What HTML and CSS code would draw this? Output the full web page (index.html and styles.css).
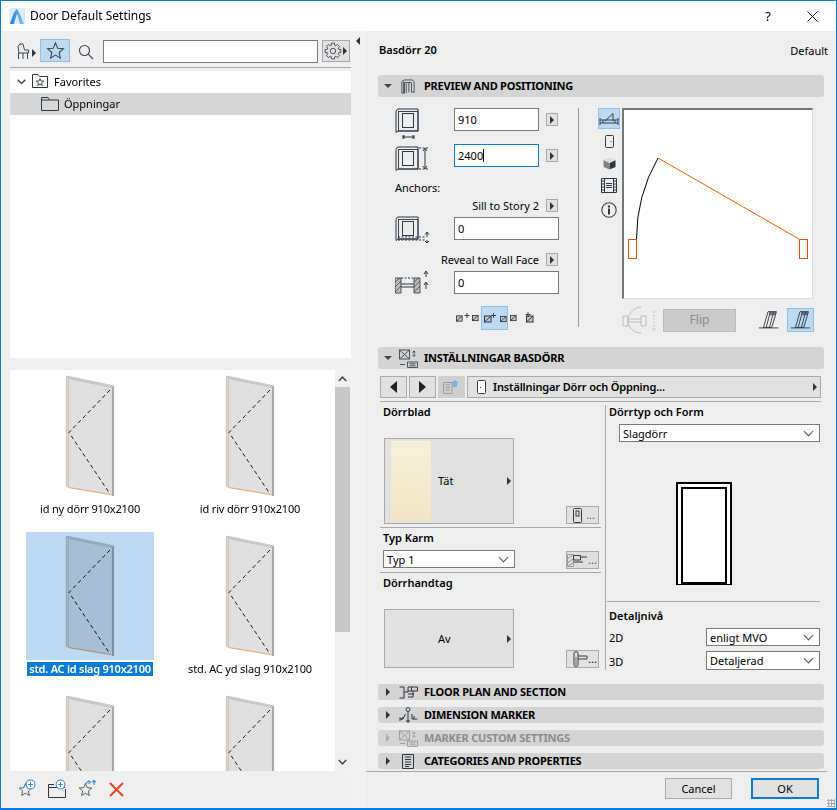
FILE: index.html
```html
<!DOCTYPE html>
<html lang="sv">
<head>
<meta charset="utf-8">
<title>Door Default Settings</title>
<link rel="stylesheet" href="styles.css">
</head>
<body>
<svg class="defs" width="0" height="0" aria-hidden="true">
  <defs>
    <linearGradient id="app-arch" x1="0" y1="0" x2="1" y2="0">
      <stop offset="0" stop-color="#1f78de"/>
      <stop offset="1" stop-color="#8cc3f5"/>
    </linearGradient>
    <symbol id="door-thumb" viewBox="0 0 128 128">
      <polygon points="40,4 88,14 88,124 42,116 40,115" fill="#e0e0e0"/>
      <polyline points="40,5 88,15" fill="none" stroke="#c8c8c8" stroke-width="3"/>
      <line x1="40.5" y1="5" x2="40.5" y2="115" stroke="#c9c9c9" stroke-width="1.5"/>
      <line x1="42.5" y1="8" x2="42.5" y2="115" stroke="#d6c2b4" stroke-width="1.2"/>
      <line x1="87" y1="15" x2="87" y2="124" stroke="#a8a8a8" stroke-width="2.2"/>
      <line x1="43" y1="115.5" x2="85" y2="122.5" stroke="#f3a878" stroke-width="1"/>
      <polyline points="84,18 43,60.5 84,122" fill="none" stroke="#1a1a1a" stroke-width="1" stroke-dasharray="4 3"/>
    </symbol>
    <symbol id="star" viewBox="0 0 20 20">
      <polygon points="10,2 12.3,7.6 18.4,8.1 13.8,12.1 15.2,18 10,14.9 4.8,18 6.2,12.1 1.6,8.1 7.7,7.6" fill="none" stroke="#3b4650" stroke-width="1.1"/>
    </symbol>
    <symbol id="plus" viewBox="0 0 12 12">
      <circle cx="6" cy="6" r="4.8" fill="#fff" stroke="#2f86e8" stroke-width="1.1"/>
      <path d="M3.4 6H8.6M6 3.4V8.6" stroke="#2f86e8" stroke-width="1.1"/>
    </symbol>
    <symbol id="win-frame" viewBox="0 0 24 26">
      <path d="M1 3.5 2.5 1H23V23H3L1 24.5Z" fill="none" stroke="#2e3640" stroke-width="1"/>
      <rect x="3.5" y="3.5" width="19.500" height="19.500" fill="none" stroke="#2e3640" stroke-width=".9"/>
      <rect x="7.500" y="5.500" width="11" height="14" fill="none" stroke="#2e3640" stroke-width="1"/>
    </symbol>
    <symbol id="leaf" viewBox="0 0 28 22">
      <path d="M8 19 13 2H22L17 19ZM11 19 15.500 2M14.500 19 19 2" fill="none" stroke="#333c46" stroke-width="1"/>
      <path d="M15 2h7l-1 4h-7z" fill="#333c46" opacity=".65"/>
      <line x1="3" y1="19.500" x2="24" y2="19.500" stroke="#333c46"/>
    </symbol>
    <symbol id="anchor-mark" viewBox="0 0 8 8">
      <rect x=".5" y="1" width="6.5" height="6" fill="#c8c8c8" stroke="#2e3640"/>
      <path d="M.5 7 7 1" stroke="#2e3640"/>
    </symbol>
  </defs>
</svg>

<div class="window">
  <header class="titlebar">
    <svg class="app-icon" width="16" height="16" viewBox="0 0 16 16">
      <path d="M0 16V2L2 0H16V16Z" fill="#dcebfa"/>
      <path d="M1 16C3 10 5 3 8 1 10 4 13 11 15 16H11C10 12 9 8 8 6 7 9 6 12 5 16Z" fill="url(#app-arch)"/>
    </svg>
    <span class="title-text">Door Default Settings</span>
    <span class="title-help">?</span>
    <svg class="title-close" width="11" height="11" viewBox="0 0 11 11"><path d="M.5.5 10.5 10.5M10.5.5 .5 10.5" stroke="#111" fill="none"/></svg>
  </header>

  <main class="main">
    <aside class="left">
      <div class="toolbar">
        <svg class="tb-chair" width="12" height="16" viewBox="0 0 12 16">
          <path d="M1.500 10V16M2 10 1 3 3 1H6L7.500 7H11.500V10ZM10.500 10V16M6 10V16" fill="none" stroke="#3b4650"/>
        </svg>
        <span class="tri-right tb-tri"></span>
        <span class="tb-star"><svg width="19" height="19"><use href="#star"/></svg></span>
        <svg class="tb-search" width="16" height="16" viewBox="0 0 16 16"><circle cx="6.5" cy="6.5" r="5" fill="none" stroke="#3b4650" stroke-width="1.1"/><path d="M10.2 10.2 15 15" stroke="#3b4650" stroke-width="1.1"/></svg>
        <div class="tb-input"></div>
        <span class="tb-gear">
          <svg width="18" height="18" viewBox="-9 -9 18 18">
            <polygon points="5.77,-1.65 7.85,-1.53 7.85,1.53 5.77,1.65 5.25,2.91 6.63,4.47 4.47,6.63 2.91,5.25 1.65,5.77 1.53,7.85 -1.53,7.85 -1.65,5.77 -2.91,5.25 -4.47,6.63 -6.63,4.47 -5.25,2.91 -5.77,1.65 -7.85,1.53 -7.85,-1.53 -5.77,-1.65 -5.25,-2.91 -6.63,-4.47 -4.47,-6.63 -2.91,-5.25 -1.65,-5.77 -1.53,-7.85 1.53,-7.85 1.65,-5.77 2.91,-5.25 4.47,-6.63 6.63,-4.47 5.25,-2.91" fill="none" stroke="#3b4650" stroke-width=".9"/>
            <circle r="2.7" fill="none" stroke="#3b4650" stroke-width=".9"/>
          </svg>
          <span class="tri-right"></span>
        </span>
      </div>
      <div class="tree">
        <div class="tree-row">
          <svg class="tree-chev" width="9" height="6" viewBox="0 0 9 6"><path d="M.7.7 4.5 4.5 8.3.7" fill="none" stroke="#444" stroke-width="1.4"/></svg>
          <svg class="tree-folder" width="16" height="14" viewBox="0 0 16 14">
            <path d="M.5 13.5V.5H6L7.5 2.5H15.5V13.5Z" fill="none" stroke="#2e3640"/>
            <polygon points="8,4.5 9,7 11.6,7.2 9.6,8.9 10.3,11.5 8,10.1 5.7,11.5 6.4,8.9 4.4,7.2 7,7" fill="none" stroke="#2e3640" stroke-width=".9"/>
          </svg>
          <span>Favorites</span>
        </div>
        <div class="tree-row is-active">
          <svg class="tree-folder-sub" width="18" height="14" viewBox="0 0 18 14"><path d="M.5 13.5V.5H7L8.5 3H17.5V13.5ZM.5 3H8.5" fill="none" stroke="#2e3640"/></svg>
          <span>Öppningar</span>
        </div>
      </div>

      <div class="lib">
        <div class="thumbs">
          <figure class="thumb">
            <svg class="thumb-img" width="128" height="128"><use href="#door-thumb"/></svg>
            <figcaption>id ny dörr 910x2100</figcaption>
          </figure>
          <figure class="thumb">
            <svg class="thumb-img" width="128" height="128"><use href="#door-thumb"/></svg>
            <figcaption>id riv dörr 910x2100</figcaption>
          </figure>
          <figure class="thumb is-selected">
            <div class="thumb-pick"><svg class="thumb-img" width="128" height="128"><use href="#door-thumb"/></svg></div>
            <figcaption>std. AC id slag 910x2100</figcaption>
          </figure>
          <figure class="thumb">
            <svg class="thumb-img" width="128" height="128"><use href="#door-thumb"/></svg>
            <figcaption>std. AC yd slag 910x2100</figcaption>
          </figure>
          <figure class="thumb">
            <svg class="thumb-img" width="128" height="128"><use href="#door-thumb"/></svg>
          </figure>
          <figure class="thumb">
            <svg class="thumb-img" width="128" height="128"><use href="#door-thumb"/></svg>
          </figure>
        </div>
        <div class="scrollbar">
          <svg class="sb-arrow" width="9" height="6" viewBox="0 0 9 6"><path d="M.8 5 4.5 1.2 8.2 5" fill="none" stroke="#444" stroke-width="1.5"/></svg>
          <div class="sb-thumb"></div>
          <svg class="sb-arrow sb-down" width="9" height="6" viewBox="0 0 9 6"><path d="M.8 1 4.5 4.8 8.2 1" fill="none" stroke="#444" stroke-width="1.5"/></svg>
        </div>
      </div>

      <div class="lib-actions">
        <svg width="20" height="20" viewBox="0 0 20 20"><use href="#star" x="0" y="3" width="15" height="15"/><use href="#plus" x="7" y="0" width="11" height="11"/></svg>
        <svg class="act-folder" width="20" height="20" viewBox="0 0 20 20"><path d="M1.5 5.5H7M1.5 8.5V18.5H18.5V10M1.5 5.5V8.5H18" fill="none" stroke="#2e3640" stroke-width="1"/><use href="#plus" x="8" y="0" width="11" height="11"/></svg>
        <svg class="act-star" width="20" height="20" viewBox="0 0 20 20"><use href="#star" x="0" y="3" width="15" height="15"/><path d="M8 5C8.5 2.5 10.5 2 12 3M16 6V1.5M14 3.5 16 1.3 18 3.5M10.5 1.5 12.3 3 10.5 5" fill="none" stroke="#2f86e8" stroke-width="1.1"/></svg>
        <svg class="act-x" width="15" height="15" viewBox="0 0 15 15"><path d="M1 1 14 14M14 1 1 14" stroke="#f0431e" stroke-width="2"/></svg>
      </div>
    </aside>

    <div class="splitter"><span class="tri-left"></span></div>

    <section class="right">
      <div class="obj-head"><strong>Basdörr 20</strong><span class="obj-default">Default</span></div>

      <div class="sec-head sec-open">
        <span class="tri-down"></span>
        <svg class="sec-icon" width="14" height="15" viewBox="0 0 16 17"><path d="M1 16V3L4 1H13L15 3V15H12V4H4V16ZM3 16V3M6 16V5M9 4V15" fill="none" stroke="#3b4650"/></svg>
        <span class="sec-name">PREVIEW AND POSITIONING</span>
      </div>

      <div class="preview">
        <div class="pos">
          <div class="pos-row">
            <svg class="pos-icon" width="36" height="32" viewBox="0 0 36 32"><use href="#win-frame" width="24" height="26"/><path d="M8 29H19M8 29l2-1.5M8 29l2 1.5M19 29l-2-1.5M19 29l-2 1.5M8 27v4M19 27v4" stroke="#2e3640" fill="none"/></svg>
            <div class="field field-s">910</div>
            <span class="arrow-btn"></span>
          </div>
          <div class="pos-row pos-row-gap">
            <svg class="pos-icon pos-icon-2" width="36" height="26" viewBox="0 0 36 26"><use href="#win-frame" width="24" height="26"/><path d="M24 2H33M24 23H33" stroke="#2e3640" stroke-dasharray="2 1.5"/><path d="M30 2V23M30 2l-2 3M30 2l2 3M30 23l-2-3M30 23l2-3" stroke="#2e3640" fill="none"/></svg>
            <div class="field field-s field-focus">2400<span class="caret"></span></div>
            <span class="arrow-btn"></span>
          </div>
          <div class="pos-label">Anchors:</div>
          <div class="pos-anchor pos-anchor-1"><span>Sill to Story 2</span><span class="arrow-btn"></span></div>
          <div class="pos-row pos-row-tight">
            <svg class="pos-icon pos-icon-3" width="36" height="28" viewBox="0 0 36 28"><use href="#win-frame" width="24" height="26"/><path d="M3 21H30M3 24H30" stroke="#2e3640" stroke-dasharray="2 1.5"/><path d="M32 16V21M32 16l-2 2.5M32 16l2 2.5M32 24v3M32 27l-2-2M32 27l2-2" stroke="#2e3640" fill="none"/></svg>
            <div class="field">0</div>
          </div>
          <div class="pos-anchor pos-anchor-2"><span>Reveal to Wall Face</span><span class="arrow-btn"></span></div>
          <div class="pos-row pos-row-tight">
            <svg class="pos-icon" width="36" height="24" viewBox="0 0 36 24"><path d="M0 7H6V22H0ZM19 7H25V22H19Z" fill="#bdbdbd" stroke="#2e3640" stroke-width=".8"/><path d="M0 11 5 7M0 16 6 10M0 21 6 15M19 11 24 7M19 16 25 10M19 21 25 15" stroke="#2e3640" stroke-width=".7"/><path d="M6 7H19" stroke="#2e3640" stroke-dasharray="2 1.5"/><path d="M6 13H19M6 16H19" stroke="#2e3640"/><path d="M31 1V6M29 3l2-3 2 3M31 12V18M29 14l2-3 2 3" stroke="#2e3640" fill="none"/></svg>
            <div class="field">0</div>
          </div>
          <div class="anchor-modes">
            <span class="mode mode-first"><svg width="14" height="10" viewBox="0 0 14 10"><use href="#anchor-mark" y="2" width="7" height="7"/><path d="M11 0V5M8.500 2.500H13.500" stroke="#2e3640" stroke-width=".9"/></svg></span>
            <span class="mode"><svg width="7" height="8" viewBox="0 0 8 8"><use href="#anchor-mark" width="8" height="8"/></svg></span>
            <span class="mode mode-on"><svg width="24" height="12" viewBox="0 0 24 12"><use href="#anchor-mark" x="1" y="3" width="8" height="8"/><path d="M10.500 1V6M8 3.500H13" stroke="#2e3640" stroke-width=".9"/><use href="#anchor-mark" x="17" y="3" width="7" height="8"/></svg></span>
            <span class="mode"><svg width="7" height="8" viewBox="0 0 8 8"><use href="#anchor-mark" width="8" height="8"/></svg></span>
            <span class="mode mode-last"><svg width="10" height="12" viewBox="0 0 10 12"><use href="#anchor-mark" x="1" y="3" width="8" height="8"/><path d="M3 0V5M.5 2.500H5.500" stroke="#2e3640" stroke-width=".9"/></svg></span>
          </div>
        </div>

        <div class="views">
          <span class="view view-on"><svg width="20" height="14" viewBox="0 0 20 14"><path d="M1 6V13M1 8H4V11H1M19 6V13M19 8H16V11H19M4 8H16M4 11H16M6 9 14 1.500V9" fill="none" stroke="#333c46"/></svg></span>
          <span class="view view-a"><svg width="9" height="13" viewBox="0 0 9 13"><rect x=".5" y=".5" width="8" height="12" rx="1" fill="none" stroke="#333c46"/><rect x="5.500" y="6" width="1" height="1" fill="#333c46"/></svg></span>
          <span class="view view-b"><svg width="13" height="13" viewBox="0 0 13 13"><path d="M6.500 6 12.500 3V10L6.500 12.500Z" fill="#2e3640"/><path d="M6.500 6 .5 3V10L6.500 12.500Z" fill="#7b838b"/><path d="M6.500.5 12.500 3 6.500 6 .5 3Z" fill="#dcdcdc"/></svg></span>
          <span class="view view-b"><svg width="16" height="15" viewBox="0 0 16 15"><path d="M.5.500H15.500V14.500H.5ZM3.500.500V14.500M12.500.500V14.500M.5 3H3.500M.5 6H3.500M.5 9H3.500M.5 12H3.500M12.500 3H15.500M12.500 6H15.500M12.500 9H15.500M12.500 12H15.500M5 5.500H11M5 7.500H11M5 9.500H11" fill="none" stroke="#2e3640"/></svg></span>
          <span class="view view-c"><svg width="16" height="16" viewBox="0 0 16 16"><circle cx="8" cy="8" r="7.200" fill="none" stroke="#3b4650" stroke-width="1.100"/><rect x="7" y="6.500" width="2" height="6" fill="#2e3640"/><rect x="7" y="3.500" width="2" height="2" fill="#2e3640"/></svg></span>
        </div>

        <div class="stage">
          <svg class="canvas" width="188" height="188" viewBox="2 2 188 188">
            <rect x="6.500" y="131.500" width="8" height="19" fill="none" stroke="#e5500a"/>
            <rect x="177.500" y="131.500" width="8" height="19" fill="none" stroke="#e5500a"/>
            <path d="M14.500 131A163 163 0 0 1 36 50" fill="none" stroke="#000"/>
            <path d="M36 50 177 131" stroke="#f06000" fill="none"/>
          </svg>
          <div class="stage-foot">
            <svg class="flip-icon" width="34" height="28" viewBox="0 0 34 28"><path d="M1 10H6V20H1ZM19 10H24V20H19ZM6 13H19M6 16H19M6 15C6 7 13 1 19 1M6 15C6 22 13 27 19 27" fill="none" stroke="#bcbcbc"/><path d="M32 5V24M29.500 21.500 32 25 34.500 21.500" fill="none" stroke="#bcbcbc" stroke-dasharray="2 1.500"/></svg>
            <span class="flip-btn">Flip</span>
            <span class="leaf-btn"><svg width="26" height="22" viewBox="0 0 28 22"><use href="#leaf" width="28" height="22"/></svg></span>
            <span class="leaf-btn leaf-on"><svg width="26" height="22" viewBox="0 0 28 22"><use href="#leaf" width="28" height="22"/></svg></span>
          </div>
        </div>
      </div>

      <div class="sec-head sec-open">
        <span class="tri-down"></span>
        <svg class="sec-icon sec-icon-wide" width="19" height="19" viewBox="0 0 19 19"><path d="M.5 1H10.500V10H.5ZM.5 1 10.500 10M10.500 1 .5 10M8.500 13H18.500V18.500H8.500ZM10.500 14.800H16.500M10.500 16.800H16.500M15 2V7M13.500 3.500 15 2 16.500 3.500M13.500 6 15 7.500 16.500 6M1 15.500H6" fill="none" stroke="#3b4650" stroke-width=".9"/></svg>
        <span class="sec-name sec-name-alt">INSTÄLLNINGAR BASDÖRR</span>
      </div>

      <div class="settings">
        <div class="nav">
          <span class="nav-btn"><span class="nav-tri nav-prev"></span></span>
          <span class="nav-btn"><span class="nav-tri nav-next"></span></span>
          <span class="nav-btn nav-off"><svg width="17" height="14" viewBox="0 0 17 14"><path d="M.5 2.500H9V13.500H.5ZM2.500 5H7M2.500 7.500H7M2.500 10H7" fill="none" stroke="#9b9b9b"/><path d="M10 7V3H8L12 0 16 3H14V7Z" fill="#79b0ee"/></svg></span>
          <span class="nav-wide">
            <svg width="9" height="14" viewBox="0 0 9 14"><rect x=".5" y=".5" width="8" height="13" rx="1" fill="#fff" stroke="#333c46"/><rect x="3" y="7" width="1" height="1" fill="#333c46"/></svg>
            <strong>Inställningar Dörr och Öppning...</strong>
            <span class="tri-right nav-wide-tri"></span>
          </span>
        </div>
        <div class="rule"></div>
        <div class="cols">
          <div class="col-left">
            <div class="label label-l">Dörrblad</div>
            <div class="pick-row pick-row-1">
              <div class="pick pick-tall">
                <div class="swatch"></div>
                <span class="pick-text">Tät</span>
                <span class="tri-right pick-tri"></span>
              </div>
              <span class="dots-btn"><svg width="9" height="15" viewBox="0 0 9 15"><rect x=".5" y=".5" width="8" height="14" rx="1" fill="none" stroke="#333c46"/><rect x="3" y="3" width="3" height="5" fill="none" stroke="#333c46"/></svg><span class="dots">...</span></span>
            </div>
            <div class="rule rule-left"></div>
            <div class="label label-l label-karm">Typ Karm</div>
            <div class="karm-row">
              <div class="select select-karm">Typ 1</div>
              <span class="dots-btn dots-btn-off"><svg width="21" height="13" viewBox="0 0 21 13"><path d="M.5.500H6.500V12.500H.5ZM.5 5 6 .5M.5 9 6 5M1 12 6 9" fill="none" stroke="#8a8a8a" stroke-width=".8"/><path d="M6.500 1.500H13.500V6H6.500ZM13.500 3H20M6.500 8H16" fill="none" stroke="#333c46"/></svg><span class="dots">...</span></span>
            </div>
            <div class="rule rule-left"></div>
            <div class="label label-l label-karm">Dörrhandtag</div>
            <div class="pick-row pick-row-2">
              <div class="pick pick-short">
                <span class="pick-text pick-text-av">Av</span>
                <span class="tri-right pick-tri"></span>
              </div>
              <span class="dots-btn"><svg width="15" height="16" viewBox="0 0 15 16"><path d="M1 1.500C1 .5 5 .5 5 1.500V14.500C5 15.500 1 15.500 1 14.500Z" fill="none" stroke="#333c46"/><path d="M5 5H14V8H5" fill="none" stroke="#333c46"/><rect x="2" y="6" width="2" height="8" fill="#aaa"/></svg><span class="dots dots-dark">...</span></span>
            </div>
          </div>
          <div class="col-right">
            <div class="label">Dörrtyp och Form</div>
            <div class="select select-type">Slagdörr</div>
            <div class="door-shape"><div class="door-inner"></div></div>
            <div class="rule rule-right"></div>
            <div class="label label-detail">Detaljnivå</div>
            <div class="detail-row"><span class="detail-key">2D</span><div class="select select-detail">enligt MVO</div></div>
            <div class="detail-row"><span class="detail-key">3D</span><div class="select select-detail select-tall">Detaljerad</div></div>
          </div>
        </div>
      </div>

      <div class="sec-mini sec-first">
        <span class="tri-right sec-tri"></span>
        <svg class="sec-icon" width="19" height="13" viewBox="0 0 19 13"><path d="M.5 1H5V12H.5M5 6H9V1H18.500V5H9M12.500 1V5M9 8H15M14 5V11H9" fill="none" stroke="#2e3640"/></svg>
        <span class="sec-name">FLOOR PLAN AND SECTION</span>
      </div>
      <div class="sec-mini">
        <span class="tri-right sec-tri"></span>
        <svg class="sec-icon" width="19" height="17" viewBox="0 0 19 17"><circle cx="9" cy="2.500" r="2" fill="none" stroke="#2e3640"/><path d="M9 4.500V16M7 14H11M1 12H4L6.500 7M13 7V12H18.500M15 9V12M1 10V14M4 10 2 13" fill="none" stroke="#2e3640"/></svg>
        <span class="sec-name">DIMENSION MARKER</span>
      </div>
      <div class="sec-mini sec-off">
        <span class="tri-right sec-tri"></span>
        <svg class="sec-icon" width="19" height="17" viewBox="0 0 19 17"><path d="M.5 1H10.500V10H.5ZM.5 1 10.500 10M10.500 1 .5 10M8.500 11H18.500V16.500H8.500ZM10.500 12.800H16.500M10.500 14.800H16.500M15 2V7M13.500 3.500 15 2 16.500 3.500M13.500 6 15 7.500 16.500 6M1 13.500H6" fill="none" stroke="#9a9a9a" stroke-width=".9"/></svg>
        <span class="sec-name">MARKER CUSTOM SETTINGS</span>
      </div>
      <div class="sec-mini">
        <span class="tri-right sec-tri"></span>
        <svg class="sec-icon sec-icon-doc" width="12" height="15" viewBox="0 0 12 15"><path d="M.5.500H11.500V14.500H.5ZM3 3H9M3 5.500H9M3 8H9M3 10.500H9M3 12.500H7" fill="none" stroke="#2e3640"/></svg>
        <span class="sec-name">CATEGORIES AND PROPERTIES</span>
      </div>

      <div class="foot-rule"></div>
      <div class="footer">
        <span class="btn">Cancel</span>
        <span class="btn btn-default">OK</span>
      </div>
      <div class="grip"></div>
    </section>
  </main>
</div>
</body>
</html>
```
FILE: styles.css
```css
* { box-sizing: border-box; }
html, body { margin: 0; padding: 0; }
body { width: 837px; height: 810px; overflow: hidden; font-family: "Noto Sans", "Open Sans", sans-serif; font-size: 11px; line-height: 14px; color: #000; background: #f0f0f0; }
svg { display: block; flex: none; }
.defs { position: absolute; }
figure { margin: 0; }
strong { font-weight: 600; }

.window { width: 837px; height: 810px; border: 1px solid #0a7bd6; border-bottom-width: 2px; display: flex; flex-direction: column; background: #f0f0f0; }

.titlebar { height: 30px; flex: none; display: flex; align-items: center; background: #fff; padding-left: 8px; }
.title-text { margin-left: 5px; font-size: 12px; }
.title-help { margin-left: auto; font-size: 13px; }
.title-close { margin-left: 36px; margin-right: 18px; }

.main { flex: 1; display: flex; min-height: 0; }

.left { width: 350px; flex: none; padding: 7px 0 0 9px; display: flex; flex-direction: column; background: #efefef; }
.toolbar { height: 30px; flex: none; display: flex; align-items: flex-start; padding: 1px 0 0 6px; border-bottom: 1px solid #a8a8a8; }
.tb-chair { margin: 4px 0 0 1px; }
.tb-tri { margin: 10px 0 0 3px; }
.tri-right { display: inline-block; width: 0; height: 0; border-left: 4px solid #333; border-top: 4px solid transparent; border-bottom: 4px solid transparent; flex: none; }
.tri-left { display: block; width: 0; height: 0; border-right: 4px solid #333; border-top: 4px solid transparent; border-bottom: 4px solid transparent; }
.tri-down { width: 0; height: 0; border-top: 4px solid #444; border-left: 4px solid transparent; border-right: 4px solid transparent; flex: none; }
.tb-star { width: 30px; height: 23px; margin-left: 4px; background: #bddaf2; border: 1px solid #90c0e8; display: flex; align-items: center; justify-content: center; flex: none; }
.tb-search { margin: 5px 0 0 8px; }
.tb-input { width: 215px; height: 23px; margin: 1px 0 0 9px; background: #fff; border: 1px solid #7a7a7a; flex: none; }
.tb-gear { width: 28px; height: 22px; margin: 1px 0 0 4px; background: #e1e1e1; border: 1px solid #a8a8a8; display: flex; align-items: center; padding-left: 1px; gap: 1px; flex: none; }

.tree { height: 287px; flex: none; margin-top: 3px; background: #fff; width: 341px; }
.tree-row { height: 22px; display: flex; align-items: center; padding-left: 7px; }
.tree-chev { margin-right: 6px; }
.tree-folder { margin-right: 6px; margin-top: -3px; }
.tree-row.is-active { background: #d7d7d7; padding-left: 31px; }
.tree-folder-sub { margin-right: 5px; }

.lib { margin-top: 12px; height: 401px; flex: none; width: 341px; display: flex; }
.thumbs { width: 325px; height: 401px; overflow: hidden; background: #fff; display: grid; grid-template-columns: 160px 160px; grid-auto-rows: 160px; padding-top: 2px; align-content: start; }
.thumb { display: flex; flex-direction: column; align-items: center; width: 160px; }
.thumb figcaption { height: 14px; margin-top: 2px; padding: 0 3px; white-space: nowrap; letter-spacing: -.15px; }
.thumb-pick { background: #bddaf2; width: 128px; height: 128px; }
.thumb-pick .thumb-img { mix-blend-mode: multiply; }
.thumb.is-selected figcaption { background: #0a7bd6; color: #fff; font-weight: 600; margin-top: 2px; padding: 0 2px; letter-spacing: -.25px; }

.scrollbar { width: 15px; height: 401px; display: flex; flex-direction: column; align-items: center; background: #f0f0f0; }
.sb-arrow { margin-top: 6px; }
.sb-thumb { width: 15px; height: 245px; margin-top: 5px; background: #c8c8c8; }
.sb-down { margin-top: 127px; }

.lib-actions { display: flex; align-items: flex-start; padding: 8px 0 0 8px; }
.act-folder { margin-left: 9px; }
.act-star { margin-left: 11px; }
.act-x { margin: 3px 0 0 11px; }

.splitter { width: 15px; flex: none; background: #f2f2f2; padding: 6px 0 0 5px; }

.right { flex: 1; min-width: 0; position: relative; background: #eee; display: flex; flex-direction: column; }
.obj-head { height: 16px; margin: 11px 8px 0 13px; display: flex; justify-content: space-between; align-items: center; }
.obj-default { padding-top: 2px; }
.sec-head { height: 22px; margin: 17px 12px 0 12px; background: #d4d4d4; border-radius: 3px; display: flex; align-items: center; padding-left: 6px; flex: none; }
.sec-head + .preview + .sec-head { margin-top: 0; }
.sec-icon { margin-left: 9px; }
.sec-icon-wide { margin-left: 7px; }
.sec-name { margin-left: 9px; font-weight: 700; white-space: nowrap; letter-spacing: -.22px; }
.sec-name-alt { margin-left: 6px; }

.preview { height: 250px; flex: none; margin-left: 12px; display: flex; padding-top: 11px; align-items: flex-start; }
.pos { width: 201px; height: 219px; flex: none; padding-left: 17px; border-right: 1px solid #999; }
.pos-row { display: flex; align-items: center; height: 23px; }
.pos-icon { width: 36px; margin-right: 23px; align-self: flex-start; }
.pos-icon-2 { margin-top: 2px; }
.pos-icon-3 { margin-top: -1px; }
.pos-row-gap { margin-top: 13px; }
.pos-row-tight { margin-top: 5px; }
.field { width: 105px; height: 23px; background: #fff; border: 1px solid #7a7a7a; padding: 4px 0 0 3px; flex: none; }
.field-s { width: 85px; }
.field-focus { border-color: #0a7bd6; }
.caret { display: inline-block; width: 1px; height: 13px; background: #000; vertical-align: -2px; }
.arrow-btn { width: 12px; height: 13px; margin-left: 7px; background: #e1e1e1; border: 1px solid #aaa; display: flex; align-items: center; justify-content: center; flex: none; }
.arrow-btn::before { content: ""; border-left: 4px solid #333; border-top: 4px solid transparent; border-bottom: 4px solid transparent; }
.pos-label { margin-top: 14px; }
.pos-anchor { height: 13px; display: flex; align-items: center; justify-content: flex-end; width: 163px; }
.pos-anchor-1 { margin-top: 4px; }
.pos-anchor-2 { margin-top: 13px; }
.anchor-modes { display: flex; align-items: center; margin: 12px 0 0 59px; height: 24px; }
.mode { height: 24px; display: flex; align-items: center; justify-content: center; margin-right: 2px; }
.mode-first { margin-left: 2px; }
.mode-on { width: 27px; background: #bddaf2; border: 1px solid #90c0e8; }
.mode-on + .mode { margin-right: 8px; }
.mode-last { margin-left: 0; }

.views { width: 22px; flex: none; margin-left: 19px; display: flex; flex-direction: column; align-items: center; }
.view { width: 22px; height: 21px; display: flex; align-items: center; justify-content: center; }
.view-on { background: #bddaf2; border: 1px solid #90c0e8; }
.view-a { margin-top: 2px; }
.view-b { margin-top: 1px; }
.view-c { margin-top: 3px; }

.stage { margin-left: 2px; width: 192px; flex: none; }
.canvas { background: #fff; border-top: 2px solid #777; border-left: 2px solid #777; border-right: 1px solid #ddd; border-bottom: 1px solid #ddd; box-sizing: content-box; width: 188px; height: 188px; }
.stage-foot { display: flex; align-items: center; margin-top: 9px; height: 24px; }
.flip-btn { width: 73px; height: 23px; background: #cbcbcb; border: 1px solid #bbb; color: #8a8a8a; display: flex; align-items: center; justify-content: center; margin-left: 7px; font-size: 12px; flex: none; }
.leaf-btn { width: 27px; height: 24px; display: flex; align-items: center; justify-content: center; flex: none; }
.flip-btn + .leaf-btn { margin-left: 19px; }
.leaf-on { margin-left: 5px; background: #bddaf2; border: 1px solid #90c0e8; }

.settings { margin-left: 14px; width: 441px; flex: none; padding-top: 7px; }
.nav { display: flex; gap: 2px; height: 22px; }
.nav-btn { width: 27px; height: 22px; background: #e1e1e1; border: 1px solid #aaa; display: flex; align-items: center; justify-content: center; flex: none; }
.nav-off { background: #cfcfcf; border-color: #cfcfcf; }
.nav-tri { width: 0; height: 0; border-top: 6px solid transparent; border-bottom: 6px solid transparent; }
.nav-prev { border-right: 7px solid #222; }
.nav-next { border-left: 7px solid #222; }
.nav-wide { flex: 1; height: 22px; background: #e1e1e1; border: 1px solid #aaa; display: flex; align-items: center; padding: 0 3px 0 9px; gap: 7px; }
.nav-wide strong { letter-spacing: -.15px; }
.nav-wide-tri { margin-left: auto; }
.rule { height: 1px; background: #a8a8a8; margin-top: 3px; }
.cols { display: flex; margin-top: 3px; height: 265px; }
.col-left { width: 221px; flex: none; }
.col-right { width: 215px; flex: none; margin-left: 4px; border-left: 1px solid #a8a8a8; padding-left: 3px; }
.label { font-weight: 600; height: 14px; }
.label-l { padding-left: 3px; }
.pick-row { display: flex; align-items: flex-end; padding-left: 4px; margin-top: 19px; }
.pick { width: 130px; background: #e1e1e1; border: 1px solid #aaa; display: flex; align-items: center; flex: none; }
.pick-tall { height: 86px; padding-left: 6px; }
.pick-short { height: 59px; padding-left: 53px; }
.swatch { width: 40px; height: 80px; background: linear-gradient(180deg, #f6f0d9, #f4ebcd 60%, #f2e5c4); margin-right: 7px; flex: none; }
.pick-tri { margin-left: auto; margin-right: 2px; }
.dots-btn { width: 33px; height: 18px; margin-left: 52px; background: #e1e1e1; border: 1px solid #aaa; display: flex; align-items: center; padding-left: 6px; flex: none; }
.dots { margin-left: auto; margin-right: 3px; color: #555; line-height: 14px; }
.dots-dark { color: #000; }
.rule-left { margin-top: 3px; }
.label-karm { margin-top: 3px; }
.karm-row { display: flex; align-items: flex-start; margin-top: 5px; padding-left: 3px; }
.select { background: #fff; border: 1px solid #7a7a7a; height: 18px; padding: 1px 0 0 3px; line-height: 15px; position: relative; flex: none; }
.select::after { content: ""; position: absolute; right: 7px; top: 3px; width: 6px; height: 6px; border-right: 1px solid #555; border-bottom: 1px solid #555; transform: rotate(45deg); }
.select-karm { width: 132px; }
.dots-btn-off { margin-left: 51px; margin-top: 1px; padding-left: 0; background: #dedede; }
.select-type { width: 201px; margin: 5px 0 0 10px; }
.door-shape { width: 56px; height: 103px; margin: 40px 0 0 67px; border: 2px solid #000; border-bottom-width: 1px; background: #fff; padding: 3px 3px 0 3px; }
.door-inner { width: 100%; height: 100%; border: 2px solid #000; background: #fff; }
.rule-right { margin-top: 16px; margin-left: -2px; width: 213px; }
.label-detail { margin-top: 7px; }
.detail-row { display: flex; align-items: center; margin-top: 5px; justify-content: space-between; }
.detail-key { padding-top: 2px; }
.select-detail { width: 114px; }
.select-tall { height: 19px; }

.sec-mini { height: 16px; margin: 7px 12px 0 12px; background: #d4d4d4; border-radius: 3px; display: flex; align-items: center; padding-left: 8px; flex: none; }
.sec-first { margin-top: 14px; }
.sec-tri { border-left-color: #333; }
.sec-mini .sec-icon { margin-left: 9px; }
.sec-mini .sec-name { margin-left: 6px; }
.sec-mini .sec-icon-doc { margin-left: 12px; margin-right: 4px; }
.sec-off { color: #8c8c8c; }
.sec-off .sec-tri { border-left-color: #aaa; }

.foot-rule { height: 1px; background: #a8a8a8; margin-top: 2px; width: 461px; flex: none; }
.footer { display: flex; justify-content: flex-end; gap: 19px; padding: 6px 17px 0 0; }
.btn { width: 67px; height: 21px; background: #e1e1e1; border: 1px solid #aaa; display: flex; align-items: center; justify-content: center; }
.btn-default { width: 68px; border: 2px solid #0a7bd6; }
.grip { position: absolute; right: 1px; bottom: 1px; width: 8px; height: 8px; background-image: radial-gradient(#aaa 1px, transparent 1.2px); background-size: 3px 3px; }
```
